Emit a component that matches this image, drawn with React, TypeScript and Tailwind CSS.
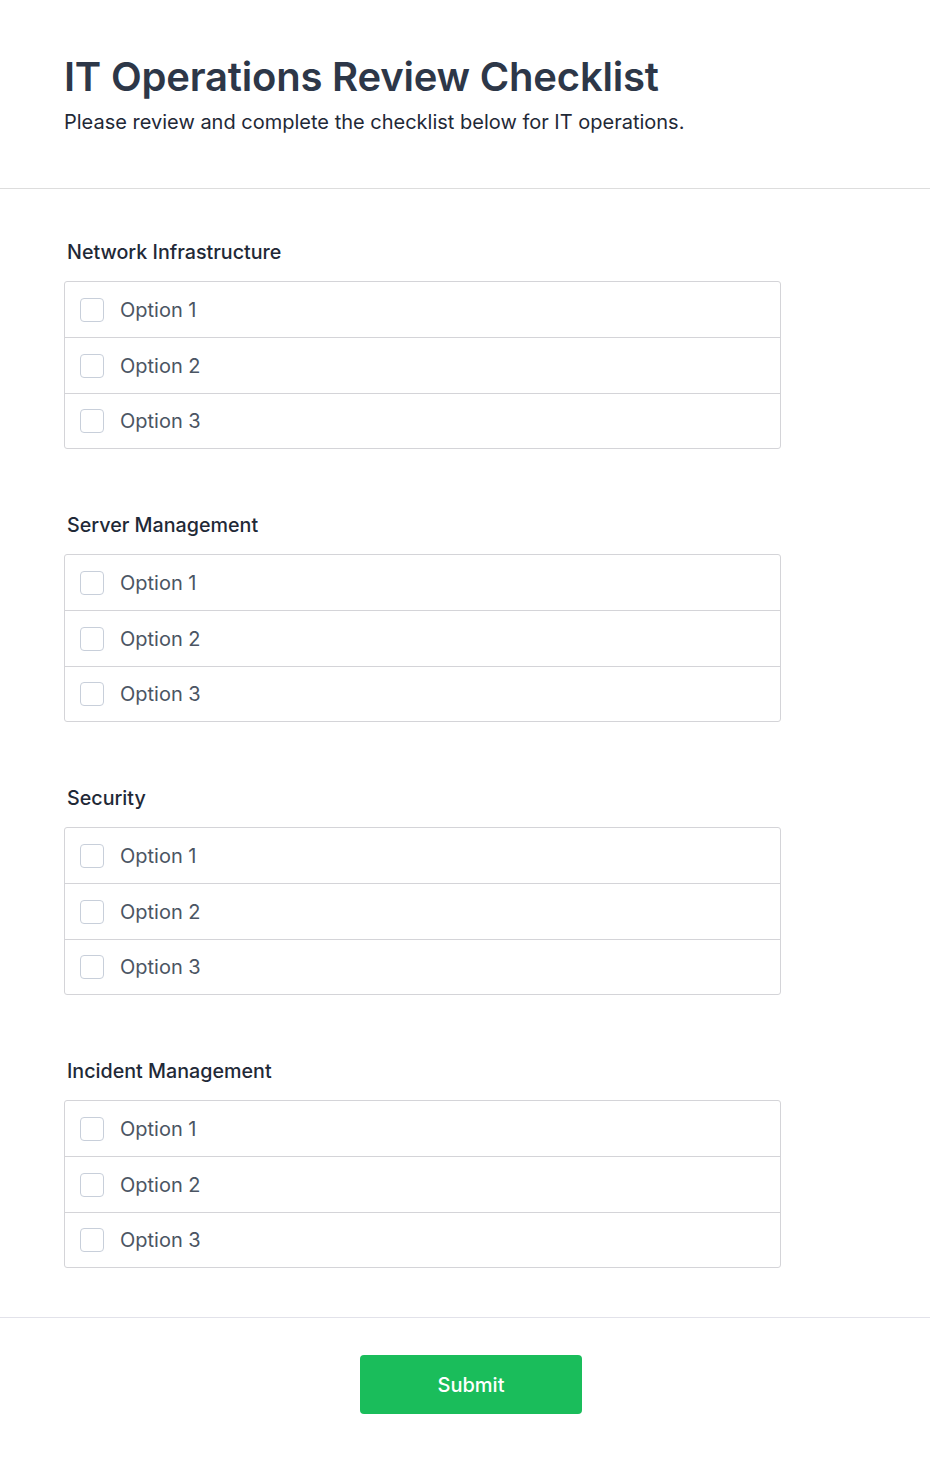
import React from "react";

const sections = ["Network Infrastructure", "Server Management", "Security", "Incident Management"];
const options = ["Option 1", "Option 2", "Option 3"];

export default function App() {
  return (
    <div className="min-h-[1464px] bg-white" style={{ fontFamily: "Inter, 'Noto Sans', sans-serif" }}>
      <header className="px-16 pt-[53px] pb-[52px] border-b border-[#dddddd]">
        <h1 className="text-[40px] leading-[48px] font-semibold text-[#2d3748] tracking-[-0.2px]">IT Operations Review Checklist</h1>
        <p className="mt-[7px] text-[20px] leading-[28px] text-[#1f2937]">Please review and complete the checklist below for IT operations.</p>
      </header>
      <main className="px-16 pt-[51px] pb-[49px] border-b border-[#e2e2ea]">
        <div className="flex flex-col gap-[64px]">
          {sections.map((s) => (
            <section key={s} className="w-[717px]">
              <h2 className="pl-[3px] text-[19.7px] leading-[24px] font-medium text-[#1f2937] mb-[17px]">{s}</h2>
              <div className="border border-[#d4d4d8] rounded-[3px]">
                {options.map((o, i) => (
                  <label
                    key={o}
                    className={`flex items-center px-[15px] ${i === 1 ? "h-[56px] border-t border-[#d4d4d8]" : i === 2 ? "h-[55px] border-t border-[#d4d4d8]" : "h-[55px]"}`}
                  >
                    <span className="w-[24px] h-[24px] rounded-[4px] border border-[#c8cfda] bg-white shrink-0" />
                    <span className="ml-[16px] text-[20px] text-[#4b5563]">{o}</span>
                  </label>
                ))}
              </div>
            </section>
          ))}
        </div>
      </main>
      <footer className="pt-[37px]">
        <button className="ml-[360px] w-[222px] h-[59px] rounded-[4px] bg-[#1abd5b] text-white text-[20px] font-medium">Submit</button>
      </footer>
    </div>
  );
}
